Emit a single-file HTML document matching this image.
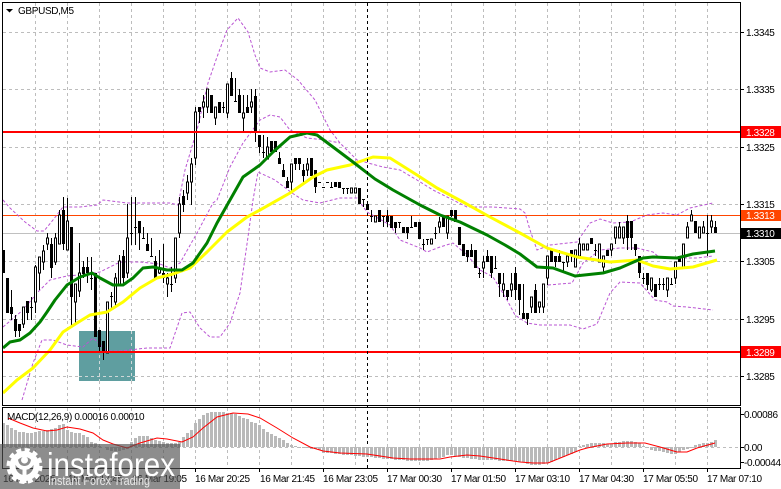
<!DOCTYPE html>
<html><head><meta charset="utf-8"><style>
html,body{margin:0;padding:0;background:#fff;width:781px;height:489px;overflow:hidden}
svg{display:block}
text{font-family:"Liberation Sans",sans-serif;font-size:10px;letter-spacing:-.35px;fill:#000}
</style></head><body>
<svg width="781" height="489" viewBox="0 0 781 489" xmlns="http://www.w3.org/2000/svg">
<rect width="781" height="489" fill="#fff"/>
<!-- grid -->
<path fill="none" stroke="#bdbdbd" stroke-dasharray="3 3" d="M35.5 3V405M67.5 3V405M99.5 3V405M131.5 3V405M163.5 3V405M195.5 3V405M227.5 3V405M259.5 3V405M291.5 3V405M323.5 3V405M355.5 3V405M387.5 3V405M419.5 3V405M451.5 3V405M483.5 3V405M515.5 3V405M547.5 3V405M579.5 3V405M611.5 3V405M643.5 3V405M675.5 3V405M707.5 3V405M3 32.5H740M3 89.5H740M3 147.5H740M3 204.5H740M3 261.5H740M3 319.5H740M3 376.5H740M35.5 408V468M67.5 408V468M99.5 408V468M131.5 408V468M163.5 408V468M195.5 408V468M227.5 408V468M259.5 408V468M291.5 408V468M323.5 408V468M355.5 408V468M387.5 408V468M419.5 408V468M451.5 408V468M483.5 408V468M515.5 408V468M547.5 408V468M579.5 408V468M611.5 408V468M643.5 408V468M675.5 408V468M707.5 408V468M3 447.5H740"/>
<rect x="79" y="331" width="56" height="50" fill="#5f9ea0"/>
<path fill="none" stroke="#cfd8d8" stroke-dasharray="3 3" d="M99.5 331V381M131.5 331V381M79 376.5H135"/>
<path stroke="#c0c0c0" d="M3 233.5H740"/>
<path stroke="#ff4500" d="M3 215.5H740"/>
<!-- bollinger -->
<g fill="none" stroke="#ba55d3" stroke-dasharray="3 2">
<path d="M3 200L10 208L25 222L37 231L44 231L53 220L63 207L80 207L97 205L103 200L127 203L145 203L170 203L178 205L185 170L197 130L208 83L217 57L227 30L238 18L248 32L255 55L260 68L270 72L285 70L298 80L315 100L330 130L340 143L357 160L383 167L400 170L417 180L433 190L467 207L493 207L520 209L525 213L530 230L537 250L550 245L577 242L590 223L600 219L613 223L630 222L647 215L663 213L677 215L690 208L713 203"/>
<path d="M3 327L23 310L37 293L50 280L67 276L78 275L100 272L120 262L140 262L160 264L170 268L180 263L197 233L213 203L217 200L230 167L243 143L260 120L270 115L280 117L290 130L307 138L325 140L340 143"/>
<path d="M22 400L33 363L42 340L53 340L67 345L83 347L93 338L107 351L120 351L147 348L170 348L182 313L190 312L200 328L210 337L220 337L230 323L240 293L248 237L253 200L258 172L275 180L292 193L303 200L320 203L340 198L357 198L367 212L390 225L400 240L420 248L427 252L440 247L453 243L467 255L480 270L493 277L507 300L515 315L527 323L540 325L570 325L583 329L597 324L610 293L620 282L640 283L655 300L667 302L673 306L687 307L713 310"/>
<path d="M548 285L572 283L583 263L600 250L620 248L637 248L653 252L660 258L675 258L697 258L713 256"/>
</g>
<!-- wicks -->
<path fill="none" stroke="#000" d="M3.5 250V273M7.5 278V313M11.5 290V320M15.5 315V337M19.5 324V337M23.5 307V328M27.5 301V320M31.5 297V320M35.5 265V313M39.5 257V290M43.5 245V270M47.5 233V250M51.5 238V278M55.5 233V265M59.5 210V244M63.5 197V250M67.5 198V250M71.5 227V325M75.5 284V325M79.5 243V297M83.5 261V278M87.5 257V283M91.5 257V290M95.5 273V337M99.5 330V353M103.5 341V360M107.5 302V353M111.5 292V310M115.5 273V308M119.5 255V285M123.5 250V283M127.5 204V278M131.5 197V245M135.5 197V245M139.5 221V250M143.5 227V238M147.5 233V251M151.5 238V256M155.5 256V278M159.5 250V274M163.5 244V283M167.5 273V297M171.5 267V292M175.5 238V283M179.5 197V238M183.5 190V212M187.5 175V200M191.5 158V205M195.5 107V165M199.5 107V123M203.5 95V118M207.5 89V113M211.5 95V113M215.5 107V125M219.5 102V113M223.5 102V113M227.5 84V118M231.5 72V96M235.5 78V101M239.5 89V113M243.5 95V131M247.5 95V113M251.5 89V113M255.5 89V142M259.5 135V153M263.5 135V158M267.5 137V159M271.5 141V153M275.5 141V152M279.5 152V164M283.5 164V177M287.5 177V188M291.5 164V193M295.5 158V170M299.5 158V170M303.5 164V182M307.5 158V176M311.5 158V176M315.5 170V193M331.5 182V187M339.5 182V188M343.5 188V194M347.5 188V194M363.5 199V207M371.5 210V222M383.5 216V227M387.5 210V227M395.5 222V233M399.5 222V228M407.5 227V239M411.5 216V227M423.5 239V250M427.5 239V245M435.5 227V239M439.5 217V233M447.5 216V239M451.5 210V217M467.5 250V262M471.5 244V257M479.5 268V278M483.5 256V278M487.5 250V262M491.5 256V278M495.5 256V268M499.5 273V297M503.5 273V297M507.5 290V300M511.5 273V297M515.5 267V300M519.5 284V315M523.5 284V319M527.5 313V325M531.5 297V313M535.5 284V313M539.5 302V313M543.5 284V313M547.5 256V285M551.5 250V262M555.5 256V267M559.5 250V262M563.5 262V273M567.5 256V267M571.5 250V262M575.5 250V267M579.5 238V256M583.5 244V250M587.5 244V250M591.5 238V244M595.5 244V256M599.5 244V262M603.5 256V273M607.5 250V256M611.5 244V256M615.5 227V244M619.5 222V238M623.5 227V244M627.5 215V250M631.5 221V250M635.5 244V256M639.5 256V278M643.5 273V284M647.5 273V290M651.5 278V292M655.5 284V297M659.5 278V290M663.5 278V290M667.5 278V297M671.5 278V285M675.5 262V284M679.5 256V262M683.5 244V267M687.5 222V238M691.5 210V221M695.5 221V233M699.5 227V238M703.5 221V233M707.5 215V256M711.5 215V233M715.5 221V233"/>
<!-- dojis -->
<path fill="none" stroke="#000" d="M30 307.5h3M90 278.5h3M110 296.5h3M130 233.5h3M134 227.5h3M142 238.5h3M150 256.5h3M170 284.5h3M222 107.5h3M234 101.5h3M262 152.5h3M318 182.5h3M322 187.5h3M326 182.5h3M330 187.5h3M342 188.5h3M346 188.5h3M362 199.5h3M370 216.5h3M382 216.5h3M398 222.5h3M410 227.5h3M422 244.5h3M426 239.5h3M434 233.5h3M478 273.5h3M494 268.5h3M562 262.5h3M594 250.5h3M642 278.5h3M658 284.5h3M662 284.5h3M670 284.5h3M706 233.5h3"/>
<!-- filled bodies -->
<path fill="none" stroke="#000" stroke-width="3" d="M3.5 250V273M7.5 278V313M11.5 307V314M15.5 319V331M19.5 324V331M27.5 301V313M51.5 244V268M63.5 210V244M71.5 227V297M83.5 267V274M87.5 267V273M95.5 273V337M99.5 330V347M103.5 341V353M123.5 256V278M139.5 221V233M147.5 244V251M155.5 261V278M163.5 273V278M183.5 196V205M199.5 107V112M211.5 95V113M219.5 102V113M231.5 78V96M239.5 95V113M247.5 107V113M255.5 96V131M259.5 135V147M271.5 141V152M275.5 141V152M279.5 158V164M283.5 170V177M287.5 181V188M295.5 158V164M299.5 158V164M303.5 170V176M311.5 158V176M315.5 170V187M335.5 182V187M339.5 182V188M359.5 188V204M367.5 204V210M379.5 210V222M387.5 216V222M391.5 216V228M395.5 222V228M403.5 227V233M407.5 227V233M415.5 222V227M419.5 222V239M443.5 216V227M451.5 210V216M455.5 210V222M459.5 227V245M463.5 244V256M467.5 250V257M471.5 250V257M475.5 250V268M487.5 256V262M491.5 256V273M499.5 273V284M507.5 290V297M515.5 273V290M519.5 284V300M523.5 313V319M527.5 313V319M535.5 290V313M551.5 250V262M555.5 256V262M559.5 256V262M571.5 250V256M591.5 238V244M607.5 250V256M627.5 221V238M631.5 221V238M635.5 244V250M639.5 256V273M647.5 273V285M655.5 284V297M679.5 256V262M695.5 221V233M715.5 227V233"/>
<!-- hollow bodies -->
<path fill="#fff" stroke="#000" d="M22.5 307h2V324h-2zM34.5 267h2V302h-2zM38.5 257h2V273h-2zM42.5 251h2V262h-2zM46.5 238h2V244h-2zM54.5 238h2V262h-2zM58.5 215h2V244h-2zM66.5 221h2V250h-2zM74.5 284h2V302h-2zM78.5 273h2V291h-2zM106.5 302h2V353h-2zM114.5 278h2V302h-2zM118.5 261h2V284h-2zM126.5 238h2V273h-2zM158.5 268h2V273h-2zM166.5 278h2V284h-2zM174.5 238h2V278h-2zM178.5 204h2V233h-2zM186.5 182h2V193h-2zM190.5 164h2V182h-2zM194.5 112h2V158h-2zM202.5 102h2V107h-2zM206.5 89h2V107h-2zM214.5 107h2V118h-2zM226.5 84h2V113h-2zM242.5 113h2V118h-2zM250.5 102h2V107h-2zM266.5 147h2V159h-2zM290.5 164h2V182h-2zM306.5 164h2V170h-2zM350.5 188h2V193h-2zM354.5 188h2V193h-2zM374.5 216h2V222h-2zM430.5 239h2V244h-2zM438.5 222h2V227h-2zM446.5 216h2V233h-2zM482.5 262h2V268h-2zM502.5 284h2V290h-2zM510.5 284h2V290h-2zM530.5 297h2V307h-2zM538.5 302h2V307h-2zM542.5 284h2V307h-2zM546.5 256h2V278h-2zM566.5 256h2V262h-2zM574.5 250h2V267h-2zM578.5 244h2V256h-2zM582.5 244h2V250h-2zM586.5 244h2V250h-2zM598.5 244h2V262h-2zM602.5 256h2V267h-2zM610.5 244h2V250h-2zM614.5 227h2V238h-2zM618.5 227h2V238h-2zM622.5 227h2V238h-2zM650.5 278h2V290h-2zM666.5 278h2V290h-2zM674.5 262h2V278h-2zM682.5 244h2V267h-2zM686.5 227h2V238h-2zM690.5 215h2V221h-2zM698.5 227h2V238h-2zM702.5 227h2V233h-2zM710.5 221h2V227h-2z"/>
<!-- moving averages -->
<path fill="none" stroke="#ffff00" stroke-width="3" stroke-linejoin="round" d="M3 393L17 380L33 368L50 350L63 332L77 323L90 315L107 312L123 302L140 288L157 278L173 274L190 268L207 252L227 232L247 217L260 210L290 193L313 177L327 170L350 165L373 157L390 158L417 175L437 188L463 202L490 217L520 233L547 248L577 257L610 262L637 260L653 266L670 269L693 267L717 260"/>
<path fill="none" stroke="#008000" stroke-width="3" stroke-linejoin="round" d="M3 348L10 342L20 340L30 333L40 322L47 312L55 300L67 285L80 277L92 273L100 278L113 285L123 285L133 278L143 268L153 267L167 270L182 270L193 263L207 243L217 223L230 200L243 177L260 165L273 152L290 137L307 133L317 135L333 147L353 162L375 179L393 190L420 205L440 215L460 222L487 235L505 245L520 254L537 267L553 268L575 276L603 273L620 268L643 258L653 257L677 258L693 254L715 251"/>
<!-- key levels -->
<path stroke="#ff0000" stroke-width="2" d="M3 132H740M3 352H740"/>
<path stroke="#000" stroke-dasharray="3 3" d="M367.5 3V468"/>
<!-- MACD histogram -->
<path fill="none" stroke="#b9b9b9" stroke-width="3" d="M3.5 447V423M7.5 447V425M11.5 447V428M15.5 447V430M19.5 447V432M23.5 447V432M27.5 447V433M31.5 447V433M35.5 447V432M39.5 447V431M43.5 447V431M47.5 447V430M51.5 447V429M55.5 447V428M59.5 447V425M63.5 447V424M67.5 447V430M71.5 447V432M75.5 447V433M79.5 447V433M83.5 447V435M87.5 447V437M91.5 447V442M95.5 447V443M99.5 447V446M107.5 447V450M111.5 447V451M115.5 447V451M119.5 447V451M123.5 447V450M127.5 447V449M131.5 447V442M135.5 447V438M139.5 447V436M143.5 447V436M147.5 447V436M151.5 447V438M155.5 447V440M159.5 447V441M163.5 447V442M167.5 447V443M171.5 447V443M175.5 447V443M179.5 447V442M183.5 447V437M187.5 447V433M191.5 447V430M195.5 447V423M199.5 447V419M203.5 447V415M207.5 447V413M211.5 447V412M215.5 447V412M219.5 447V412M223.5 447V412M227.5 447V413M231.5 447V413M235.5 447V414M239.5 447V416M243.5 447V418M247.5 447V419M251.5 447V422M255.5 447V423M259.5 447V425M263.5 447V429M267.5 447V432M271.5 447V434M275.5 447V436M279.5 447V438M283.5 447V440M287.5 447V443M291.5 447V445M295.5 447V446M299.5 447V448M303.5 447V448M307.5 447V448M311.5 447V449M315.5 447V449M319.5 447V450M323.5 447V453M327.5 447V453M331.5 447V453M335.5 447V454M339.5 447V454M343.5 447V455M347.5 447V455M351.5 447V455M355.5 447V456M359.5 447V456M363.5 447V457M367.5 447V457M371.5 447V457M375.5 447V458M379.5 447V458M383.5 447V459M387.5 447V459M391.5 447V459M395.5 447V460M399.5 447V460M403.5 447V460M407.5 447V461M411.5 447V461M415.5 447V461M419.5 447V461M423.5 447V461M427.5 447V461M431.5 447V460M435.5 447V459M439.5 447V458M443.5 447V457M447.5 447V455M451.5 447V455M455.5 447V456M459.5 447V457M463.5 447V458M467.5 447V458M471.5 447V459M475.5 447V459M479.5 447V460M483.5 447V460M487.5 447V460M491.5 447V460M495.5 447V460M499.5 447V461M503.5 447V461M507.5 447V461M511.5 447V461M515.5 447V461M519.5 447V462M523.5 447V462M527.5 447V464M531.5 447V465M535.5 447V465M539.5 447V465M543.5 447V464M547.5 447V463M551.5 447V462M555.5 447V460M559.5 447V458M563.5 447V457M567.5 447V455M571.5 447V454M575.5 447V452M579.5 447V446M583.5 447V445M587.5 447V444M591.5 447V443M595.5 447V443M599.5 447V443M603.5 447V443M607.5 447V444M611.5 447V444M615.5 447V442M619.5 447V442M623.5 447V441M627.5 447V441M631.5 447V441M635.5 447V442M639.5 447V443M643.5 447V446M647.5 447V448M651.5 447V450M655.5 447V451M659.5 447V451M663.5 447V452M667.5 447V453M671.5 447V454M675.5 447V454M679.5 447V452M683.5 447V450M687.5 447V449M691.5 447V448M695.5 447V445M699.5 447V444M703.5 447V443M707.5 447V443M711.5 447V442M715.5 447V440"/>
<path fill="none" stroke="#ff0000" d="M8 418L20 423L33 428L47 431L57 430L67 427L80 429L93 433L103 440L113 444L127 448L140 443L157 438L167 439L182 442L193 437L203 428L217 417L233 413L248 414L260 418L277 428L293 438L310 447L323 451L340 453L367 454L393 458L410 459L440 459L450 457L467 455L480 456L500 459L520 462L533 463L548 463L580 450L587 448L607 444L627 443L645 443L660 447L677 452L687 452L697 448L715 443"/>
<!-- frames -->
<path fill="none" stroke="#000" d="M2.5 2.5H740.5V405.5H2.5ZM2.5 407.5H740.5V468.5H2.5Z"/>
<path fill="none" stroke="#000" d="M740 32.5h4M740 89.5h4M740 147.5h4M740 204.5h4M740 261.5h4M740 319.5h4M740 376.5h4M740 414.5h4M740 447.5h4M740 462.5h4M67.5 468v4M131.5 468v4M195.5 468v4M259.5 468v4M323.5 468v4M387.5 468v4M451.5 468v4M515.5 468v4M579.5 468v4M643.5 468v4M707.5 468v4"/>
<!-- title -->
<path d="M6 9h7l-3.500 3.500z" fill="#000"/>
<text x="18" y="14">GBPUSD,M5</text>
<text x="7" y="420">MACD(12,26,9) 0.00016 0.00010</text>
<!-- price scale -->
<text x="746" y="36">1.3345</text>
<text x="746" y="93">1.3335</text>
<text x="746" y="151">1.3325</text>
<text x="746" y="208">1.3315</text>
<text x="746" y="265">1.3305</text>
<text x="746" y="323">1.3295</text>
<text x="746" y="380">1.3285</text>
<rect x="741" y="126" width="40" height="12" fill="#ff0000"/><text x="746" y="136" style="fill:#fff">1.3328</text>
<rect x="741" y="210" width="40" height="11" fill="#ff4500"/><text x="746" y="219" style="fill:#fff">1.3313</text>
<rect x="741" y="228" width="40" height="11" fill="#000"/><text x="746" y="237" style="fill:#fff">1.3310</text>
<rect x="741" y="346" width="40" height="12" fill="#ff0000"/><text x="746" y="356" style="fill:#fff">1.3289</text>
<text x="744" y="418">0.00086</text>
<text x="744" y="451">0.00</text>
<text x="744" y="466">-0.00044</text>
<!-- time scale -->
<text x="3" y="482">16 Mar 2025</text>
<text x="68" y="482">16 Mar 17:45</text>
<text x="132" y="482">16 Mar 19:05</text>
<text x="195" y="482">16 Mar 20:25</text>
<text x="260" y="482">16 Mar 21:45</text>
<text x="323" y="482">16 Mar 23:05</text>
<text x="387" y="482">17 Mar 00:30</text>
<text x="451" y="482">17 Mar 01:50</text>
<text x="515" y="482">17 Mar 03:10</text>
<text x="579" y="482">17 Mar 04:30</text>
<text x="643" y="482">17 Mar 05:50</text>
<text x="707" y="482">17 Mar 07:10</text>
<!-- watermark -->
<rect x="0" y="444" width="180" height="45" fill="#505050" fill-opacity=".65"/>
<g fill="none" stroke="#fff">
<circle cx="24.500" cy="466" r="12" stroke-width="6"/>
<circle cx="24.500" cy="466" r="16" stroke-width="4" stroke-dasharray="5 3.380"/>
<path stroke-width="4" d="M24.500 466V483M16 460C17 466 21 468 24.500 468C28 468 32 466 33 460"/>
</g>
<circle cx="24.500" cy="460" r="3.500" fill="#fff"/>
<text x="47" y="476" textLength="128" lengthAdjust="spacingAndGlyphs" style="font-size:33px;letter-spacing:0;fill:#fff">instaforex</text>
<text x="48" y="485" textLength="102" lengthAdjust="spacingAndGlyphs" style="font-size:13px;letter-spacing:0;fill:#e8e8e8">Instant Forex Trading</text>
</svg>
</body></html>
